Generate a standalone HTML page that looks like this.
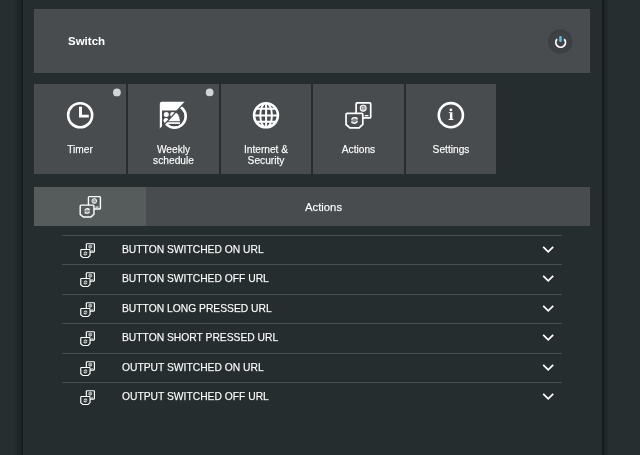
<!DOCTYPE html>
<html><head><meta charset="utf-8">
<style>
*{box-sizing:border-box;margin:0;padding:0}
html,body{width:640px;height:455px;overflow:hidden;background:#272e2f;font-family:"Liberation Sans",sans-serif;color:#fff}
.abs{position:absolute}
#main{position:absolute;left:23px;top:0;width:579px;height:455px;background:#262d2e}
#lline{position:absolute;left:21.5px;top:0;width:1.5px;height:455px;background:#161b1c}
#lsh{position:absolute;left:11.5px;top:0;width:10px;height:455px;background:linear-gradient(to right,rgba(0,0,0,0),rgba(0,0,0,.08) 40%,rgba(0,0,0,.3))}
#rline{position:absolute;left:601.5px;top:0;width:2.5px;height:455px;background:#161b1c}
#rsh{position:absolute;left:604px;top:0;width:5px;height:455px;background:linear-gradient(to right,rgba(0,0,0,.25),rgba(0,0,0,0))}
.panel{background:#484c4f}
#top{left:34px;top:9px;width:556px;height:64px}
#sw{left:68px;top:34px;font-size:11.5px;font-weight:bold;line-height:14px}
.tile{position:absolute;top:84px;height:90px;background:#484c4f}
.tile .lbl{position:absolute;left:0;right:0;text-align:center;font-size:10.2px;line-height:11px}
#hdrL{left:34px;top:187px;width:112px;height:39px;background:#565b5c}
#hdrR{left:146px;top:187px;width:444px;height:39px;background:#484c4f}
#hdrT{left:305px;top:200px;font-size:11.3px;line-height:14px}
.sep{position:absolute;left:62px;width:500px;height:1px;background:#4a4f52}
.row{position:absolute;left:122px;font-size:10.3px;line-height:12px;white-space:nowrap}
.row,.lbl,#sw,#hdrT{will-change:transform}
.row,.lbl,#hdrT{-webkit-text-stroke:0.25px rgba(255,255,255,0.6)}
</style></head><body>
<div id="lsh"></div><div id="lline"></div>
<div id="main"></div>
<div id="rline"></div><div id="rsh"></div>

<div id="top" class="abs panel"></div>
<div id="sw" class="abs">Switch</div>

<div class="tile" style="left:34px;width:92px"><div class="lbl" style="top:60px">Timer</div></div>
<div class="tile" style="left:128px;width:91px"><div class="lbl" style="top:60px">Weekly<br>schedule</div></div>
<div class="tile" style="left:221px;width:90px"><div class="lbl" style="top:60px">Internet &amp;<br>Security</div></div>
<div class="tile" style="left:313px;width:91px"><div class="lbl" style="top:60px">Actions</div></div>
<div class="tile" style="left:406px;width:90px"><div class="lbl" style="top:60px">Settings</div></div>

<div id="hdrL" class="abs"></div>
<div id="hdrR" class="abs"></div>
<div id="hdrT" class="abs">Actions</div>


<div class="sep" style="top:235px"></div>
<div class="row" style="top:244px">BUTTON SWITCHED ON URL</div>
<div class="sep" style="top:264px"></div>
<div class="row" style="top:273px">BUTTON SWITCHED OFF URL</div>
<div class="sep" style="top:294px"></div>
<div class="row" style="top:303px">BUTTON LONG PRESSED URL</div>
<div class="sep" style="top:323px"></div>
<div class="row" style="top:332px">BUTTON SHORT PRESSED URL</div>
<div class="sep" style="top:353px"></div>
<div class="row" style="top:362px">OUTPUT SWITCHED ON URL</div>
<div class="sep" style="top:382px"></div>
<div class="row" style="top:391px">OUTPUT SWITCHED OFF URL</div>

<svg id="ov" width="640" height="455" viewBox="0 0 640 455" style="position:absolute;left:0;top:0">
<defs>
<symbol id="act" viewBox="0 0 26.2 26.5" overflow="visible">
  <rect x="10.9" y="0.8" width="14.6" height="15" rx="1" fill="none" stroke="#fff" stroke-width="1.7"/>
  <circle cx="18" cy="6.1" r="2.9" fill="rgba(255,255,255,0.3)" stroke="#fff" stroke-width="1.1"/>
  <path d="M17.2 4.6 V6.4 M18.8 4.6 V6.4 M16.6 7.2 Q18 8.6 19.4 7.2" fill="none" stroke="#fff" stroke-width="0.7"/>
  <rect x="19.5" y="12.9" width="3.7" height="1.3" fill="#fff"/>
  <path d="M1.9 11.2 H16.4 Q17.6 11.2 17.6 12.4 V22.2 L13.9 25.7 H4.7 L0.85 22.4 V12.4 Q0.85 11.2 1.9 11.2 Z" fill="currentColor" stroke="#fff" stroke-width="1.7"/>
  <circle cx="9.3" cy="18.3" r="3.2" fill="rgba(255,255,255,0.35)"/>
  <path d="M6.5 17.6 A2.9 2.9 0 0 1 11.6 16.6 M12.1 19 A2.9 2.9 0 0 1 7 20" fill="none" stroke="#fff" stroke-width="1.3"/>
  <path d="M10.4 15.2 L12.6 15.6 L12 17.8 Z M8.2 21.4 L6 21 L6.6 18.8 Z" fill="#fff"/>
</symbol>
<symbol id="acts" viewBox="0 0 26.2 26.5" overflow="visible">
  <rect x="10.9" y="0.8" width="14.6" height="15" rx="1" fill="none" stroke="#fff" stroke-width="2.1"/>
  <circle cx="18" cy="6.1" r="2.9" fill="rgba(255,255,255,0.3)" stroke="#fff" stroke-width="1.1"/>
  <path d="M17.2 4.6 V6.4 M18.8 4.6 V6.4 M16.6 7.2 Q18 8.6 19.4 7.2" fill="none" stroke="#fff" stroke-width="0.7"/>
  <rect x="19.5" y="12.9" width="3.7" height="1.3" fill="#fff"/>
  <path d="M1.9 11.2 H16.4 Q17.6 11.2 17.6 12.4 V22.2 L13.9 25.7 H4.7 L0.85 22.4 V12.4 Q0.85 11.2 1.9 11.2 Z" fill="currentColor" stroke="#fff" stroke-width="2.1"/>
  <circle cx="9.3" cy="18.3" r="3.2" fill="rgba(255,255,255,0.35)"/>
  <path d="M6.5 17.6 A2.9 2.9 0 0 1 11.6 16.6 M12.1 19 A2.9 2.9 0 0 1 7 20" fill="none" stroke="#fff" stroke-width="1.3"/>
  <path d="M10.4 15.2 L12.6 15.6 L12 17.8 Z M8.2 21.4 L6 21 L6.6 18.8 Z" fill="#fff"/>
</symbol>
<clipPath id="cUL"><polygon points="210.5,73.5 156.4,132.3 112.2,91.7 166.3,32.9"/></clipPath>
<clipPath id="cLR"><polygon points="211.42,74.27 157.26,133.15 201.4,173.8 255.6,114.9"/></clipPath>
<radialGradient id="pg" cx="560.2" cy="41.5" r="13" gradientUnits="userSpaceOnUse"><stop offset="0" stop-color="#404447"/><stop offset="0.7" stop-color="#3e4245"/><stop offset="0.86" stop-color="#3a3e41"/><stop offset="1" stop-color="#484c4f"/></radialGradient>
<clipPath id="cG"><circle cx="266" cy="115.3" r="11.5"/></clipPath>
</defs>
<circle cx="116.9" cy="92.4" r="3.9" fill="#d2d5d7"/>
<circle cx="209.65" cy="92.4" r="3.85" fill="#d2d5d7"/>
<!-- clock -->
<circle cx="80.15" cy="115.25" r="12" fill="none" stroke="#fff" stroke-width="2.6"/>
<path d="M79 106.8 H82 V114.8 H88.8 V117.6 H79 Z" fill="#fff"/>
<!-- weekly -->
<g clip-path="url(#cUL)" fill="#fff">
  <path d="M159.8 103.8 Q159.8 101.8 161.8 101.8 H200 V110.4 H162 V130 H159.8 Z"/>
  <circle cx="166.3" cy="114.5" r="2.5"/>
  <circle cx="172.7" cy="114.5" r="2.5"/>
  <circle cx="166" cy="120.6" r="2.5"/>
</g>
<g clip-path="url(#cLR)">
  <circle cx="174.5" cy="116.4" r="11.2" fill="none" stroke="#fff" stroke-width="2.6"/>
  <path d="M165 121.2 A7.5 10 0 0 1 180 121.2 Z" fill="#fff"/>
  <rect x="166" y="122.2" width="14" height="1.7" fill="#fff"/>
</g>
<!-- globe -->
<g fill="none" stroke="#fff">
  <circle cx="266" cy="115.3" r="11.95" stroke-width="2.5"/>
  <g clip-path="url(#cG)">
  <line x1="266.1" y1="103" x2="266.1" y2="128" stroke-width="2"/>
  <ellipse cx="266.1" cy="115.3" rx="5.8" ry="12.2" stroke-width="2"/>
  <line x1="253" y1="108.8" x2="279" y2="108.8" stroke-width="2"/>
  <line x1="253" y1="115.4" x2="279" y2="115.4" stroke-width="2"/>
  <line x1="253" y1="121.7" x2="279" y2="121.7" stroke-width="2"/>
  </g>
</g>
<!-- tile actions -->
<use href="#act" x="345.2" y="102.1" width="26.2" height="26.5" style="color:#484c4f"/>
<!-- info -->
<circle cx="450.85" cy="115.15" r="12.05" fill="none" stroke="#fff" stroke-width="2.6"/>
<circle cx="450.9" cy="109.8" r="1.35" fill="#fff"/>
<path d="M448.8 112.2 H452.4 V119.1 H453.3 V120 H448.7 V119.1 H449.9 V113 H448.8 Z" fill="#fff"/>
<!-- power -->
<circle cx="560.2" cy="41.5" r="13" fill="url(#pg)"/>
<path d="M557.1 39.1 A4.8 4.8 0 1 0 564.2 39.1" fill="none" stroke="#fff" stroke-width="1.8"/>
<line x1="560.5" y1="37.2" x2="560.5" y2="40.8" stroke="#63b9dd" stroke-width="2.6" stroke-linecap="round"/>
<!-- header icon -->
<use href="#act" x="79.5" y="195.9" width="21.5" height="21.9" style="color:#565b5c"/>
<use href="#acts" x="80.3" y="243.3" width="14.5" height="14.7" style="color:#262d2e"/>
<path d="M543.2 246.8 L548.2 251.8 L553.2 246.8" fill="none" stroke="#fff" stroke-width="1.8"/>
<use href="#acts" x="80.3" y="272.3" width="14.5" height="14.7" style="color:#262d2e"/>
<path d="M543.2 275.8 L548.2 280.8 L553.2 275.8" fill="none" stroke="#fff" stroke-width="1.8"/>
<use href="#acts" x="80.3" y="302.3" width="14.5" height="14.7" style="color:#262d2e"/>
<path d="M543.2 305.8 L548.2 310.8 L553.2 305.8" fill="none" stroke="#fff" stroke-width="1.8"/>
<use href="#acts" x="80.3" y="331.3" width="14.5" height="14.7" style="color:#262d2e"/>
<path d="M543.2 334.8 L548.2 339.8 L553.2 334.8" fill="none" stroke="#fff" stroke-width="1.8"/>
<use href="#acts" x="80.3" y="361.3" width="14.5" height="14.7" style="color:#262d2e"/>
<path d="M543.2 364.8 L548.2 369.8 L553.2 364.8" fill="none" stroke="#fff" stroke-width="1.8"/>
<use href="#acts" x="80.3" y="390.3" width="14.5" height="14.7" style="color:#262d2e"/>
<path d="M543.2 393.8 L548.2 398.8 L553.2 393.8" fill="none" stroke="#fff" stroke-width="1.8"/>
</svg>
</body></html>
